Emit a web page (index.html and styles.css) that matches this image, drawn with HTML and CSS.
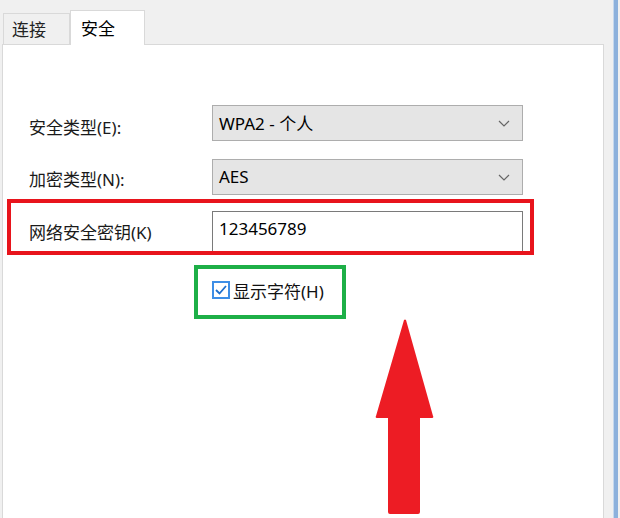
FILE: index.html
```html
<!DOCTYPE html>
<html lang="zh-CN">
<head>
<meta charset="UTF-8">
<meta name="viewport" content="width=device-width, initial-scale=1.0">
<title>无线网络属性</title>
<link rel="stylesheet" href="styles.css">
</head>
<body>

<div class="dialog">
  <div class="tabs">
    <div class="tab">连接</div>
    <div class="tab active">安全</div>
  </div>

  <div class="panel">
    <div class="row first">
      <div class="label">安全类型(E):</div>
      <div class="combo">
        <span>WPA2 - 个人</span>
        <svg class="chevron" width="12" height="7" viewBox="0 0 12 7"><path d="M1 1 L6 6 L11 1" fill="none" stroke="#666" stroke-width="1.2"/></svg>
      </div>
    </div>

    <div class="row second">
      <div class="label">加密类型(N):</div>
      <div class="combo">
        <span>AES</span>
        <svg class="chevron" width="12" height="7" viewBox="0 0 12 7"><path d="M1 1 L6 6 L11 1" fill="none" stroke="#666" stroke-width="1.2"/></svg>
      </div>
    </div>

    <div class="row key-row">
      <div class="label">网络安全密钥(K)</div>
      <div class="textbox">123456789</div>
    </div>

    <div class="show-chars">
      <svg class="checkbox" width="18" height="18" viewBox="0 0 18 18">
        <rect x="1" y="1" width="16" height="16" fill="#fff" stroke="#3d8ee6" stroke-width="2"/>
        <path d="M4 9 L7.5 12.5 L14 5" fill="none" stroke="#1f6fcc" stroke-width="1.8"/>
      </svg>
      <span>显示字符(H)</span>
    </div>

    <div class="arrow">
      <svg width="60" height="197" viewBox="0 0 60 197">
        <path d="M29 1 Q30 0 31 1 L58 97 Q59 99 57 99 L45 99 L45 193 Q45 195 43 195 L15 195 Q13 195 13 193 L13 99 L2 99 Q0 99 1 97 Z" fill="#ed1c24"/>
      </svg>
    </div>
  </div>
</div>

</body>
</html>
```

FILE: styles.css
```css
html, body {
  margin: 0;
  height: 100%;
  overflow: hidden;
}

body {
  font-family: "Noto Sans", "Noto Sans CJK SC", sans-serif;
  font-size: 17px;
  color: #111;
  background-color: #f0f0f0;
}

.dialog {
  width: 612px;
  height: 518px;
  padding-left: 2px;
  border-right: 4px solid #8db1dc;
  box-shadow: inset -1px 0 0 #c5d8ee;
  display: flex;
  flex-direction: column;
}

.tabs {
  display: flex;
  align-items: flex-end;
  height: 44px;
  padding-left: 1px;
}

.tab {
  width: 57px;
  height: 30px;
  padding-left: 8px;
  line-height: 32px;
  border: 1px solid #d9d9d9;
  border-bottom: none;
  background-color: #f0f0f0;
  color: #222;
}

.tab.active {
  width: 63px;
  height: 34px;
  padding-left: 10px;
  line-height: 35px;
  background-color: #fff;
  position: relative;
  top: 1px;
  color: #000;
}

.panel {
  width: 600px;
  flex: 1;
  background-color: #fff;
  border: 1px solid #d9d9d9;
  border-bottom: none;
}

.row {
  display: flex;
  align-items: center;
  margin-top: 18px;
}

.row.first {
  margin-top: 60px;
}

.label {
  width: 183px;
  padding-left: 26px;
  padding-top: 6px;
  color: #1a1a1a;
}

.row.second .label {
  padding-top: 2px;
}

.combo {
  width: 297px;
  height: 34px;
  padding: 0 6px 0 6px;
  background-color: #e5e5e5;
  border: 1px solid #adadad;
  display: flex;
  align-items: center;
  justify-content: space-between;
  color: #000;
}

.combo span {
  margin-top: -2px;
}

.chevron {
  margin-right: 6px;
}

.key-row {
  margin-top: 4px;
  margin-left: 4px;
  width: 519px;
  height: 48px;
  border: 4px solid #e8141c;
  align-items: flex-end;
}

.key-row .label {
  width: 183px;
  padding-left: 18px;
  padding-top: 0;
  align-self: center;
  margin-top: 8px;
}

.textbox {
  width: 303px;
  height: 39px;
  padding-left: 6px;
  line-height: 34px;
  border: 1px solid #7a7a7a;
  border-bottom: none;
  background-color: #fff;
  color: #000;
}

.show-chars {
  margin-top: 10px;
  margin-left: 191px;
  width: 130px;
  height: 46px;
  border: 4px solid #1daf47;
  display: flex;
  align-items: center;
  padding-left: 14px;
}

.checkbox {
  margin-right: 3px;
  margin-top: -4px;
}

.show-chars span {
  margin-top: -4px;
  color: #111;
}

.arrow {
  margin-left: 372px;
  height: 197px;
}

.arrow svg {
  display: block;
}
```
